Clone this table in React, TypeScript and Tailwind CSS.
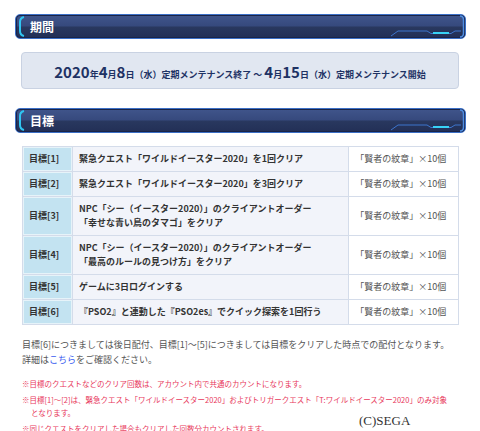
import React from "react"

const rows = [
  { label: "目標[1]", text: ["緊急クエスト「ワイルドイースター2020」を1回クリア"] },
  { label: "目標[2]", text: ["緊急クエスト「ワイルドイースター2020」を3回クリア"] },
  {
    label: "目標[3]",
    text: ["NPC「シー（イースター2020）」のクライアントオーダー", "「幸せな青い鳥のタマゴ」をクリア"],
  },
  {
    label: "目標[4]",
    text: ["NPC「シー（イースター2020）」のクライアントオーダー", "「最高のルールの見つけ方」をクリア"],
  },
  { label: "目標[5]", text: ["ゲームに3日ログインする"] },
  { label: "目標[6]", text: ["『PSO2』と連動した『PSO2es』でクイック探索を1回行う"] },
]

const SectionBar = ({ title }: { title: string }) => (
  <div className="relative h-[25px] rounded-[5px] border border-[#3b6fc6] bg-[linear-gradient(to_bottom,#40558b_0%,#36497d_48%,#29385f_52%,#222f56_100%)] shadow-[inset_0_0_0_1px_#1a2447]">
    {/* left cyan bracket */}
    <svg className="absolute left-0 top-0" width="12" height="23" viewBox="0 0 12 23">
      <path d="M8 2 Q4 3 4 7 L4 16 Q4 20 8 21" fill="none" stroke="#2fc6f2" strokeWidth="2" />
    </svg>
    {/* right bottom ornament */}
    <svg className="absolute right-0 top-0" width="80" height="23" viewBox="0 0 80 23">
      <path d="M6 21 L13 16 L42 16 L46 18.5 L66 18.5 L70 16 L76 16" fill="none" stroke="#3d74cc" strokeWidth="1" />
      <path d="M48 18 L64 18" stroke="#38d2f6" strokeWidth="2" />
      <path d="M75 1 Q78.5 1 78.5 5 L78.5 18 Q78.5 22 75 22" fill="none" stroke="#4d8de2" strokeWidth="1.5" />
    </svg>
    <div className="pl-[14px] leading-[23px] text-[12px] font-bold text-white">{title}</div>
  </div>
)

export default function App() {
  return (
    <div className="relative w-[480px] h-[431px] overflow-hidden bg-white font-['Noto_Sans_CJK_JP','Noto_Sans',sans-serif]">
      <div className="pl-[15px] pr-[14px] pt-[14px]">
        <SectionBar title="期間" />

        <div className="mx-[6px] mt-[13px] mr-[7px] flex h-[37px] items-center justify-center rounded-[4px] border border-[#c9d2e2] bg-[#e1e7f1] font-bold text-[#1e3264]">
          <span className="whitespace-nowrap leading-none">
            <span className="text-[15px]">2020</span>
            <span className="text-[9px]">年</span>
            <span className="text-[15px]">4</span>
            <span className="text-[9px]">月</span>
            <span className="text-[15px]">8</span>
            <span className="text-[9px]">日（水）定期メンテナンス終了 ～ </span>
            <span className="text-[15px]">4</span>
            <span className="text-[9px]">月</span>
            <span className="text-[15px]">15</span>
            <span className="text-[9px]">日（水）定期メンテナンス開始</span>
          </span>
        </div>

        <div className="mt-[19px]">
          <SectionBar title="目標" />
        </div>

        <table className="ml-[7px] mt-[13px] w-[437px] border-collapse text-[9px] leading-[14px]">
          <colgroup>
            <col className="w-[50px]" />
            <col className="w-[277px]" />
            <col className="w-[110px]" />
          </colgroup>
          <tbody>
            {rows.map((row) => (
              <tr key={row.label}>
                <td className="border border-[#d4dcea] bg-[#c3e3f1] py-[5px] pl-[6px] font-bold text-[#333] shadow-[inset_0_0_0_1px_#e6f3f9]">
                  {row.label}
                </td>
                <td className="border border-[#d4dcea] bg-[#f2f4fa] py-[5px] pl-[6px] font-bold text-[#333]">
                  {row.text.map((t) => (
                    <div key={t}>{t}</div>
                  ))}
                </td>
                <td className="border border-[#d4dcea] bg-white py-[5px] pl-[6px] text-[#555]">「賢者の紋章」×10個</td>
              </tr>
            ))}
          </tbody>
        </table>

        <div className="ml-[7px] mt-[12px] text-[9px] leading-[15px] text-[#555]">
          <p>目標[6]につきましては後日配付、目標[1]～[5]につきましては目標をクリアした時点での配付となります。</p>
          <p>
            詳細は<span className="text-[#3a5cf0]">こちら</span>をご確認ください。
          </p>
        </div>

        <div className="ml-[7px] mt-[10px] text-[7.5px] leading-[13px] text-[#e8385c]">
          <p>※目標のクエストなどのクリア回数は、アカウント内で共通のカウントになります。</p>
          <p className="mt-[3px] pl-[9px] -indent-[9px]">
            ※目標[1]～[2]は、緊急クエスト「ワイルドイースター2020」およびトリガークエスト「T:ワイルドイースター2020」のみ対象
            <br />
            となります。
          </p>
          <p className="mt-[3px]">※同じクエストをクリアした場合もクリアした回数分カウントされます。</p>
        </div>
      </div>

      <div className="absolute left-[359px] top-[413px] font-['Liberation_Serif',serif] text-[13px] leading-[16px] text-[#333]">
        (C)SEGA
      </div>
    </div>
  )
}
